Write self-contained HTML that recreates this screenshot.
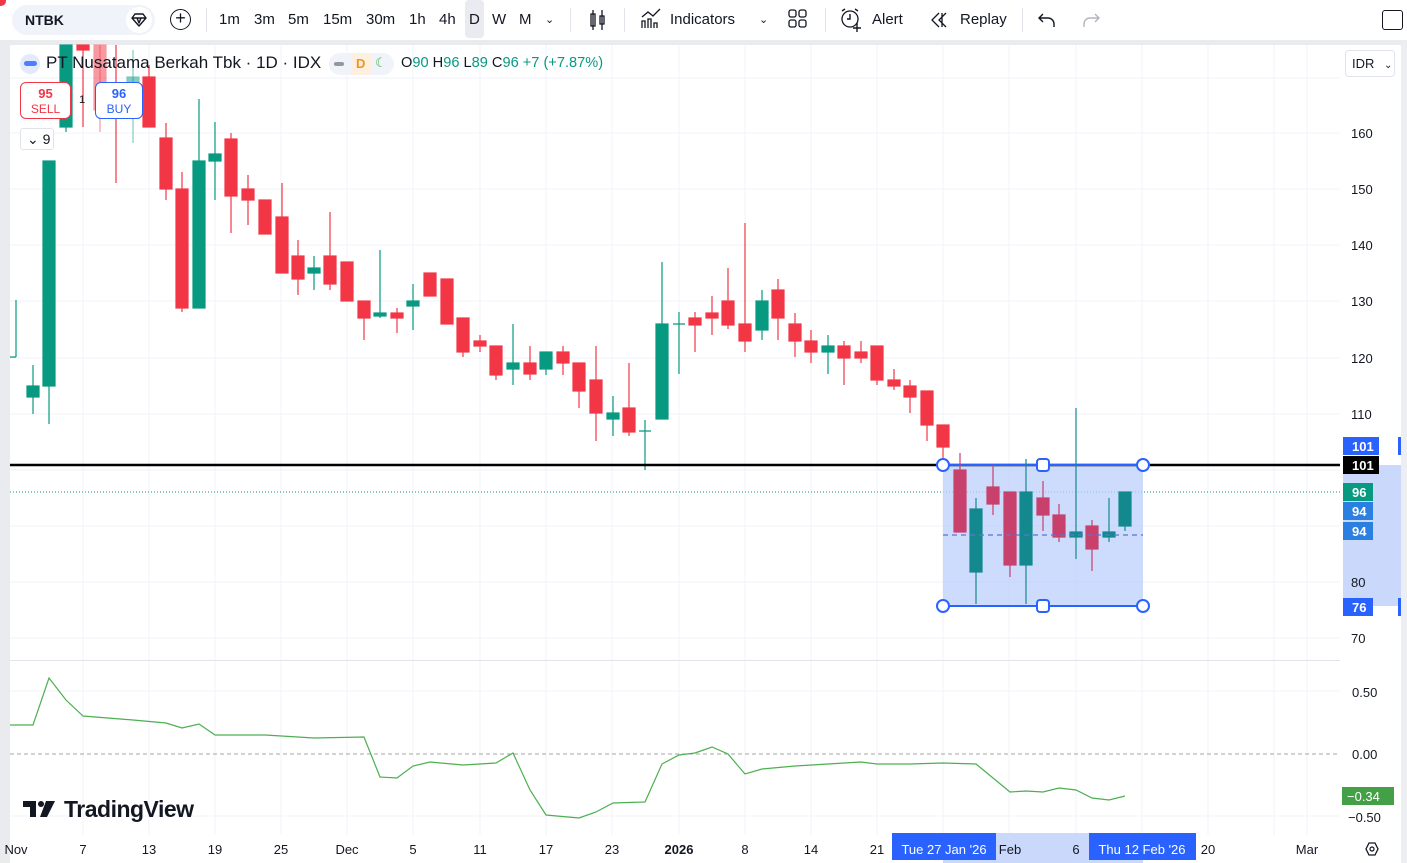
<!DOCTYPE html>
<html><head><meta charset="utf-8"><style>
*{margin:0;padding:0;box-sizing:border-box}
body{width:1407px;height:863px;overflow:hidden;background:#fff;font-family:"Liberation Sans",sans-serif;color:#131722;position:relative}
.tb{position:absolute;left:0;top:0;width:1407px;height:40px;background:#fff}
.tb span{position:absolute;top:11px;font-size:15px}
.sep{position:absolute;top:8px;width:1px;height:24px;background:#e0e3eb}
svg{position:absolute;left:0;top:0}
</style></head><body>
<div class="tb">
<div style="position:absolute;left:-4px;top:-4px;width:10px;height:10px;border-radius:50%;background:#f23645"></div>
<div style="position:absolute;left:12px;top:5px;width:143px;height:30px;border-radius:15px;background:#f0f3fa"></div>
<div style="position:absolute;left:126px;top:7px;width:26px;height:26px;border-radius:13px;background:#fff"></div>
<svg style="left:130px;top:11px" width="18" height="18"><path d="M2 7l3-4h8l3 4-7 8z M2 7h14M7 7l2 5 2-5" fill="none" stroke="#131722" stroke-width="1.4" stroke-linejoin="round"/></svg>
<span style="left:25px;font-weight:bold;font-size:14px;top:12px">NTBK</span>
<div style="position:absolute;left:170px;top:9px;width:21px;height:21px;border:1.5px solid #131722;border-radius:50%;text-align:center;font-size:18px;line-height:17px">+</div>
<div class="sep" style="left:206px"></div>
<span style="left:219px">1m</span><span style="left:254px">3m</span><span style="left:288px">5m</span><span style="left:323px">15m</span><span style="left:366px">30m</span><span style="left:409px">1h</span><span style="left:439px">4h</span>
<div style="position:absolute;left:465px;top:0;width:19px;height:38px;background:#e9ebf0;border-radius:4px"></div>
<span style="left:469px">D</span><span style="left:492px">W</span><span style="left:519px">M</span><span style="left:545px;font-size:11px;top:13px">⌄</span>
<div class="sep" style="left:570px"></div>
<svg style="left:588px;top:8px" width="20" height="24"><path d="M5 2v20M3 6h4v12H3zM14 2v20M12 8h4v8h-4z" stroke="#131722" fill="none" stroke-width="1.3"/></svg>
<div class="sep" style="left:624px"></div>
<svg style="left:640px;top:8px" width="22" height="22"><path d="M2 20V13h3v7M8 20v-9h3v9M14 20v-5h3v5M2 9l6-5 5 4 7-7" stroke="#131722" fill="none" stroke-width="1.3"/></svg>
<span style="left:670px">Indicators</span><span style="left:759px;font-size:11px;top:13px">⌄</span>
<svg style="left:788px;top:9px" width="20" height="20"><rect x="1" y="1" width="7" height="7" rx="2" fill="none" stroke="#131722" stroke-width="1.3"/><rect x="11" y="1" width="7" height="7" rx="2" fill="none" stroke="#131722" stroke-width="1.3"/><rect x="1" y="11" width="7" height="7" rx="2" fill="none" stroke="#131722" stroke-width="1.3"/><rect x="11" y="11" width="7" height="7" rx="2" fill="none" stroke="#131722" stroke-width="1.3"/></svg>
<div class="sep" style="left:825px"></div>
<svg style="left:839px;top:7px" width="26" height="26"><circle cx="11" cy="12" r="8" fill="none" stroke="#131722" stroke-width="1.3"/><path d="M11 7v5h-3M3 4l3-2M19 4l-3-2M18 16v9M14 21h8" stroke="#131722" fill="none" stroke-width="1.4"/></svg>
<span style="left:872px">Alert</span>
<svg style="left:930px;top:11px" width="20" height="18"><path d="M9 2L2 9l7 7M16 2L9 9l7 7M12 2v14" stroke="#131722" fill="none" stroke-width="1.3"/></svg>
<span style="left:960px">Replay</span>
<div class="sep" style="left:1022px"></div>
<svg style="left:1038px;top:11px" width="20" height="18"><path d="M5 3L1 7l4 4M1 7h9a6 6 0 0 1 6 6v3" fill="none" stroke="#131722" stroke-width="1.4"/></svg>
<svg style="left:1082px;top:11px" width="20" height="18"><path d="M13 3l4 4-4 4M17 7H8a6 6 0 0 0-6 6v3" fill="none" stroke="#b2b5be" stroke-width="1.4"/></svg>
<div style="position:absolute;left:1382px;top:10px;width:21px;height:20px;border:1.5px solid #131722;border-radius:3px"></div>
</div>
<div style="position:absolute;left:0;top:40px;width:1407px;height:5px;background:#e9ebef"></div>
<div style="position:absolute;left:0;top:40px;width:10px;height:823px;background:#e9ebef"></div>
<div style="position:absolute;left:1401px;top:40px;width:6px;height:823px;background:#eceef2"></div>

<svg width="1407" height="863" style="pointer-events:none">
<g stroke="#f0f3fa" stroke-width="1">
<path d="M83 45V835M149 45V835M215 45V835M281 45V835M347 45V835M413 45V835M480 45V835M546 45V835M612 45V835M679 45V835M745 45V835M811 45V835M877 45V835M943 45V835M1009 45V835M1076 45V835M1142 45V835M1208 45V835M1274 45V835M1307 45V835"/>
<path d="M10 78H1340M10 133H1340M10 189H1340M10 245H1340M10 301H1340M10 358H1340M10 414H1340M10 470H1340M10 526H1340M10 582H1340M10 638H1340M10 691H1340M10 816H1340"/>
</g>
<path d="M10 660.5H1340" stroke="#e0e3eb"/>
<path d="M10 754H1340" stroke="#888" stroke-dasharray="4 3" stroke-width="0.8"/>
<path d="M10 492H1340" stroke="#089981" stroke-dasharray="1 2" stroke-width="1"/>
<g stroke-width="1.2">
<g stroke="#089981" fill="#089981">
<path d="M16 300V357M10 357h6"/>
<path d="M33 365V414"/><rect x="27" y="386" width="12" height="11"/>
<path d="M49 161V424"/><rect x="43" y="161" width="12" height="225"/>
<path d="M66 45V132"/><rect x="60" y="45" width="12" height="82"/>
<path d="M133 50V143" opacity=".5"/><rect x="127" y="77" width="12" height="8" opacity=".5"/>
<path d="M199 99V308"/><rect x="193" y="161" width="12" height="147"/>
<path d="M215 122V200"/><rect x="209" y="154" width="12" height="7"/>
<path d="M314 256V290"/><rect x="308" y="268" width="12" height="5"/>
<path d="M380 250V318"/><rect x="374" y="313" width="12" height="3"/>
<path d="M413 284V330"/><rect x="407" y="301" width="12" height="5"/>
<path d="M513 324V385"/><rect x="507" y="363" width="12" height="6"/>
<path d="M546 352V375"/><rect x="540" y="352" width="12" height="17"/>
<path d="M613 396V436"/><rect x="607" y="413" width="12" height="6"/>
<path d="M645 420V470M639 431h12"/>
<path d="M662 262V419"/><rect x="656" y="324" width="12" height="95"/>
<path d="M679 312V374M673 324h12"/>
<path d="M762 290V340"/><rect x="756" y="301" width="12" height="29"/>
<path d="M828 335V374"/><rect x="822" y="346" width="12" height="6"/>
</g>
<g stroke="#f23645" fill="#f23645">
<path d="M83 45V127"/><rect x="77" y="45" width="12" height="5"/>
<path d="M100 45V132" opacity=".5"/><rect x="94" y="45" width="12" height="65" opacity=".5"/>
<path d="M116 45V183"/>
<path d="M149 65V127"/><rect x="143" y="77" width="12" height="50"/>
<path d="M166 123V200"/><rect x="160" y="138" width="12" height="51"/>
<path d="M182 172V312"/><rect x="176" y="189" width="12" height="119"/>
<path d="M231 133V233"/><rect x="225" y="139" width="12" height="57"/>
<path d="M248 175V225"/><rect x="242" y="189" width="12" height="11"/>
<path d="M265 200V234"/><rect x="259" y="200" width="12" height="34"/>
<path d="M282 183V273"/><rect x="276" y="217" width="12" height="56"/>
<path d="M298 240V295"/><rect x="292" y="256" width="12" height="23"/>
<path d="M330 212V290"/><rect x="324" y="256" width="12" height="28"/>
<path d="M347 262V301"/><rect x="341" y="262" width="12" height="39"/>
<path d="M364 301V340"/><rect x="358" y="301" width="12" height="17"/>
<path d="M397 308V333"/><rect x="391" y="313" width="12" height="5"/>
<path d="M430 273V296"/><rect x="424" y="273" width="12" height="23"/>
<path d="M447 279V324"/><rect x="441" y="279" width="12" height="45"/>
<path d="M463 318V357"/><rect x="457" y="318" width="12" height="34"/>
<path d="M480 335V352"/><rect x="474" y="341" width="12" height="5"/>
<path d="M496 346V380"/><rect x="490" y="346" width="12" height="29"/>
<path d="M530 346V380"/><rect x="524" y="363" width="12" height="11"/>
<path d="M563 346V375"/><rect x="557" y="352" width="12" height="11"/>
<path d="M579 363V408"/><rect x="573" y="363" width="12" height="28"/>
<path d="M596 346V441"/><rect x="590" y="380" width="12" height="33"/>
<path d="M629 363V436"/><rect x="623" y="408" width="12" height="24"/>
<path d="M695 312V352"/><rect x="689" y="318" width="12" height="7"/>
<path d="M712 296V335"/><rect x="706" y="313" width="12" height="5"/>
<path d="M728 268V329"/><rect x="722" y="301" width="12" height="24"/>
<path d="M745 223V352"/><rect x="739" y="324" width="12" height="17"/>
<path d="M778 279V340"/><rect x="772" y="290" width="12" height="28"/>
<path d="M795 313V357"/><rect x="789" y="324" width="12" height="17"/>
<path d="M811 330V363"/><rect x="805" y="341" width="12" height="11"/>
<path d="M844 341V385"/><rect x="838" y="346" width="12" height="12"/>
<path d="M861 341V363"/><rect x="855" y="352" width="12" height="6"/>
<path d="M877 346V385"/><rect x="871" y="346" width="12" height="34"/>
<path d="M894 369V390"/><rect x="888" y="380" width="12" height="6"/>
<path d="M910 380V413"/><rect x="904" y="386" width="12" height="11"/>
<path d="M927 391V441"/><rect x="921" y="391" width="12" height="34"/>
<path d="M943 425V460"/><rect x="937" y="425" width="12" height="22"/>
</g>
</g>
<rect x="943" y="465" width="200" height="141" fill="#bcd0fb" opacity=".75"/>
<path d="M10 465H1340" stroke="#000" stroke-width="2.5"/>
<path d="M943 465H1143M943 606H1143" stroke="#2962ff" stroke-width="2"/>
<g stroke-width="1.2">
<g stroke="#c8406c" fill="#c8406c">
<path d="M960 453V532"/><rect x="954" y="470" width="12" height="62"/>
<path d="M993 465V515"/><rect x="987" y="487" width="12" height="17"/>
<path d="M1010 492V577"/><rect x="1004" y="492" width="12" height="73"/>
<path d="M1043 481V531"/><rect x="1037" y="498" width="12" height="17"/>
<path d="M1059 504V542"/><rect x="1053" y="515" width="12" height="22"/>
<path d="M1092 520V571"/><rect x="1086" y="526" width="12" height="23"/>
</g>
<g stroke="#13898f" fill="#13898f">
<path d="M976 498V604"/><rect x="970" y="509" width="12" height="63"/>
<path d="M1026 459V604"/><rect x="1020" y="492" width="12" height="73"/>
<path d="M1076 408V559"/><rect x="1070" y="532" width="12" height="5"/>
<path d="M1109 498V542"/><rect x="1103" y="532" width="12" height="5"/>
<path d="M1125 492V531"/><rect x="1119" y="492" width="12" height="34"/>
</g>
</g>
<path d="M943 535H1143" stroke="#5b73d6" stroke-dasharray="5 4" stroke-width="1.2"/>
<g fill="#fff" stroke="#2962ff" stroke-width="2">
<circle cx="943" cy="465" r="6"/><circle cx="1143" cy="465" r="6"/><circle cx="943" cy="606" r="6"/><circle cx="1143" cy="606" r="6"/>
<rect x="1037" y="459" width="12" height="12" rx="3"/><rect x="1037" y="600" width="12" height="12" rx="3"/>
</g>
<polyline fill="none" stroke="#4caf50" stroke-width="1.2" points="10,725 33,725 49,678 66,700 83,716 133,720 166,723 182,728 199,724 215,735 265,735 314,738 364,737 380,777 397,778 413,766 430,762 463,765 496,763 513,753 530,790 546,815 579,818 596,812 613,803 645,802 662,764 679,755 695,753 712,747 728,754 745,774 762,769 795,766 828,764 861,762 877,764 910,764 943,763 976,764 993,778 1010,792 1026,791 1043,792 1059,788 1076,790 1092,798 1109,800 1125,796"/>
<rect x="1343" y="465" width="58" height="141" fill="#c9d8fb"/>
<g font-size="13" fill="#131722" font-family="Liberation Sans">
<text x="1351" y="138">160</text><text x="1351" y="194">150</text><text x="1351" y="250">140</text><text x="1351" y="306">130</text><text x="1351" y="363">120</text><text x="1351" y="419">110</text><text x="1351" y="587">80</text><text x="1351" y="643">70</text>
<text x="1352" y="697">0.50</text><text x="1352" y="759">0.00</text><text x="1348" y="822">−0.50</text>
</g>
<rect x="1343" y="437" width="36" height="18" fill="#2962ff"/><rect x="1343" y="456" width="36" height="18" fill="#000"/>
<rect x="1343" y="483" width="30" height="18" fill="#089981"/><rect x="1343" y="502" width="30" height="18" fill="#2a7fe0"/><rect x="1343" y="522" width="30" height="18" fill="#2a7fe0"/>
<rect x="1343" y="598" width="30" height="18" fill="#2962ff"/><rect x="1342" y="787" width="52" height="18" fill="#43a047"/>
<rect x="1398" y="437" width="3" height="18" fill="#2962ff"/><rect x="1398" y="598" width="3" height="18" fill="#2962ff"/>
<g font-size="13" fill="#fff" font-weight="bold" font-family="Liberation Sans">
<text x="1352" y="451">101</text><text x="1352" y="470">101</text><text x="1352" y="497">96</text><text x="1352" y="516">94</text><text x="1352" y="536">94</text><text x="1352" y="612">76</text><text x="1347" y="801" font-weight="normal">−0.34</text>
</g>
<rect x="10" y="836" width="1391" height="27" fill="#fff"/>
<rect x="943" y="833" width="200" height="30" fill="#c9d8fb"/>
<rect x="892" y="833" width="104" height="27" fill="#2962ff"/><rect x="1089" y="833" width="107" height="27" fill="#2962ff"/>
<g font-size="13" fill="#131722" font-family="Liberation Sans" text-anchor="middle">
<text x="16" y="854">Nov</text><text x="83" y="854">7</text><text x="149" y="854">13</text><text x="215" y="854">19</text><text x="281" y="854">25</text><text x="347" y="854">Dec</text><text x="413" y="854">5</text><text x="480" y="854">11</text><text x="546" y="854">17</text><text x="612" y="854">23</text><text x="679" y="854" font-weight="bold">2026</text><text x="745" y="854">8</text><text x="811" y="854">14</text><text x="877" y="854">21</text><text x="1010" y="854">Feb</text><text x="1076" y="854">6</text><text x="1208" y="854">20</text><text x="1307" y="854">Mar</text>
<text x="944" y="854" fill="#fff">Tue 27 Jan '26</text><text x="1142" y="854" fill="#fff">Thu 12 Feb '26</text>
</g>
<path d="M1366 849l3-6h6l3 6-3 6h-6z" fill="none" stroke="#131722" stroke-width="1.3"/><circle cx="1372" cy="849" r="2" fill="none" stroke="#131722" stroke-width="1.2"/>
<!-- logo mark -->
<path d="M23 801h13v16h-6v-10h-7z" fill="#131722"/><circle cx="41" cy="804" r="3" fill="#131722"/><path d="M46 801h9l-8 16h-7z" fill="#131722"/>
</svg>

<div style="position:absolute;left:20px;top:54px;width:20px;height:20px;border-radius:50%;background:#e3eafc"></div>
<div style="position:absolute;left:24px;top:61px;width:13px;height:5px;border-radius:3px;background:#2962ff;opacity:.8"></div>
<div style="position:absolute;left:46px;top:53px;font-size:17px;white-space:nowrap">PT Nusatama Berkah Tbk · 1D · IDX</div>
<div style="position:absolute;left:329px;top:53px;width:65px;height:22px;border-radius:11px;background:#f0f3fa"></div>
<div style="position:absolute;left:334px;top:62px;width:10px;height:4px;background:#9598a1;border-radius:2px"></div>
<div style="position:absolute;left:351px;top:53px;width:20px;height:22px;background:#fdf0e0"></div>
<div style="position:absolute;left:356px;top:56px;font-size:13px;color:#f7931a;font-weight:bold">D</div>
<div style="position:absolute;left:375px;top:55px;font-size:13px;color:#4caf50">☾</div>
<div style="position:absolute;left:401px;top:55px;font-size:14.6px;white-space:nowrap;color:#089981"><span style="color:#131722">O</span>90 <span style="color:#131722">H</span>96 <span style="color:#131722">L</span>89 <span style="color:#131722">C</span>96 +7 (+7.87%)</div>
<div style="position:absolute;left:20px;top:82px;width:51px;height:37px;border:1px solid #f23645;border-radius:6px;background:#fff;text-align:center;color:#f23645;font-size:12px;line-height:15px;padding-top:3px"><b style="font-size:13px">95</b><br>SELL</div>
<div style="position:absolute;left:79px;top:94px;font-size:11px">1</div>
<div style="position:absolute;left:95px;top:82px;width:48px;height:37px;border:1px solid #2962ff;border-radius:6px;background:#fff;text-align:center;color:#2962ff;font-size:12px;line-height:15px;padding-top:3px"><b style="font-size:13px">96</b><br>BUY</div>
<div style="position:absolute;left:20px;top:128px;width:34px;height:22px;border:1px solid #e0e3eb;border-radius:3px;background:#fff;font-size:14px;padding:2px 0 0 6px">⌄ 9</div>
<div style="position:absolute;left:1345px;top:50px;width:50px;height:27px;border:1px solid #e0e3eb;border-radius:4px;background:#fff;font-size:13px;padding:5px 0 0 6px">IDR <span style="font-size:10px;margin-left:6px">⌄</span></div>
<div style="position:absolute;left:64px;top:796px;font-size:23px;font-weight:bold;letter-spacing:-0.5px;white-space:nowrap">TradingView</div>
</body></html>
